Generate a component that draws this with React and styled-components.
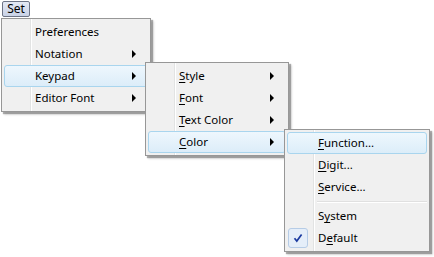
import React from 'react'
import styled, { createGlobalStyle, css } from 'styled-components'

const GlobalStyle = createGlobalStyle`
  html, body {
    margin: 0;
    padding: 0;
    background: #ffffff;
  }
  body {
    font-family: "Noto Sans", "Open Sans", "DejaVu Sans", sans-serif;
    font-size: 11px;
    color: #000;
  }
`;

const Stage = styled.div`
  position: relative;
  width: 434px;
  height: 257px;
  overflow: hidden;
  background: #fff;
`;

const MenuBar = styled.div`
  display: flex;
  padding: 1px 0 0 2px;
`;

const SetButton = styled.div`
  width: 26px;
  height: 14px;
  display: flex;
  align-items: center;
  justify-content: center;
  border: 1px solid #6d7486;
  border-radius: 2px;
  background: linear-gradient(#e4e9f4, #c9d2e6);
  font-size: 12px;
  line-height: 14px;
`;

// popup menus lie over each other, so they are placed where they open
const Menu = styled.div`
  position: absolute;
  left: ${p => p.$left}px;
  top: ${p => p.$top}px;
  width: ${p => p.$width}px;
  box-sizing: border-box;
  padding: 2px;
  border: 1px solid #979797;
  background:
    linear-gradient(to right, transparent 28px, #e2e3e3 28px, #e2e3e3 29px, #ffffff 29px, #ffffff 30px, transparent 30px),
    #f0f0f0;
  box-shadow: 2px 2px 1px rgba(0, 0, 0, 0.3), 3px 3px 2px rgba(0, 0, 0, 0.12);
  display: flex;
  flex-direction: column;
`;

const Item = styled.div`
  height: 22px;
  box-sizing: border-box;
  display: flex;
  align-items: center;
  padding-left: 30px;
  padding-right: 11px;
  border: 1px solid transparent;
  border-radius: 3px;
  position: relative;
  ${p => p.$active && css`
    border-color: #a9d5ee;
    background: linear-gradient(#eef7fd, #dcedf9);
  `}
`;

const Label = styled.span`
  flex: 1;
  white-space: nowrap;
  font-size: 11.5px;
  padding-bottom: 1px;
  u {
    text-decoration: underline;
    text-underline-offset: 2px;
    text-decoration-skip-ink: none;
  }
`;

const Arrow = styled.span`
  width: 0;
  height: 0;
  border-top: 4px solid transparent;
  border-bottom: 4px solid transparent;
  border-left: 4px solid #000;
`;

const Separator = styled.div`
  height: 7px;
  display: flex;
  align-items: center;
  padding-left: 30px;
  &::after {
    content: '';
    flex: 1;
    height: 1px;
    border-top: 1px solid #e0e0e0;
    background: #fff;
  }
`;

const CheckBox = styled.span`
  position: absolute;
  left: 0;
  top: 0;
  width: 20px;
  height: 20px;
  box-sizing: border-box;
  border: 1px solid #b6cce6;
  border-radius: 3px;
  background: #e5eef9;
  display: flex;
  align-items: center;
  justify-content: center;
`;

const Check = () => (
  <svg width="10" height="10" viewBox="0 0 10 10">
    <path d="M1.5 5.2 L3.8 8 L8.6 1.6" fill="none" stroke="#1b3aa0" strokeWidth="1.7" />
  </svg>
);

const Entry = ({ children, sub, active, checked }) => (
  <Item $active={active}>
    {checked && <CheckBox><Check /></CheckBox>}
    <Label>{children}</Label>
    {sub && <Arrow />}
  </Item>
);

export default function App() {
  return (
    <Stage>
      <GlobalStyle />
      <MenuBar>
        <SetButton>Set</SetButton>
      </MenuBar>

      <Menu $left={1} $top={18} $width={150}>
        <Entry>Preferences</Entry>
        <Entry sub>Notation</Entry>
        <Entry sub active>Keypad</Entry>
        <Entry sub>Editor Font</Entry>
      </Menu>

      <Menu $left={145} $top={62} $width={144}>
        <Entry sub><u>S</u>tyle</Entry>
        <Entry sub><u>F</u>ont</Entry>
        <Entry sub><u>T</u>ext Color</Entry>
        <Entry sub active><u>C</u>olor</Entry>
      </Menu>

      <Menu $left={284} $top={129} $width={146}>
        <Entry active><u>F</u>unction...</Entry>
        <Entry><u>D</u>igit...</Entry>
        <Entry><u>S</u>ervice...</Entry>
        <Separator />
        <Entry>S<u>y</u>stem</Entry>
        <Entry checked>D<u>e</u>fault</Entry>
      </Menu>
    </Stage>
  )
}
